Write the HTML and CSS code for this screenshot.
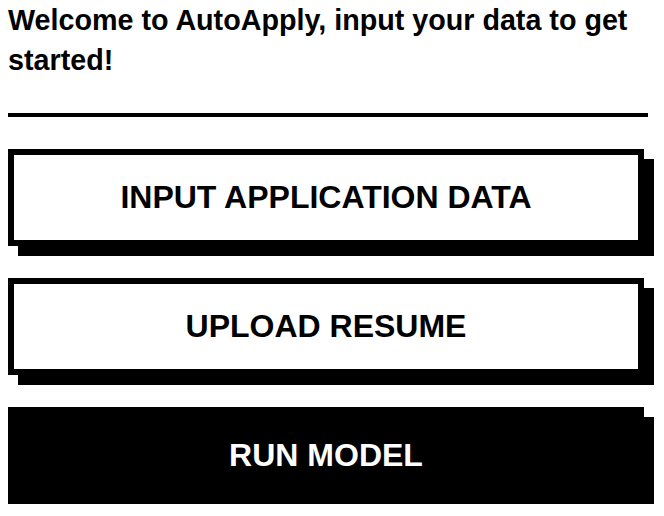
FILE: index.html
```html
<!DOCTYPE html>
<html lang="en">
<head>
    <meta charset="UTF-8">
    <meta name="viewport" content="width=device-width, initial-scale=1.0">
    <title>AutoApply</title>
    <link rel="stylesheet" href="styles.css">
</head>
<body>
    <div class="main">
        <h2 class="welcome">Welcome to AutoApply, input your data to get started!</h2>
        <hr class="divider">
        <div class="actions">
            <button class="btn">INPUT APPLICATION DATA</button>
            <button class="btn">UPLOAD RESUME</button>
            <button class="btn btn-dark">RUN MODEL</button>
        </div>
    </div>
</body>
</html>
```

FILE: styles.css
```css
body, html {
    margin: 0;
    padding: 0;
    background-color: white;
}
body {
    padding: 0 8px;
    font-family: "Liberation Sans", Arial, sans-serif;
    color: black;
}
.main {
    width: 640px;
}
.welcome {
    margin: 0;
    font-size: 28.7px;
    line-height: 40px;
    font-weight: bold;
}
.divider {
    margin: 33px 0 0 0;
    height: 4px;
    border: none;
    background-color: black;
}
.actions {
    display: flex;
    flex-direction: column;
    gap: 32px;
    margin-top: 32px;
    margin-right: 4px;
}
.btn {
    display: block;
    width: 100%;
    padding: 24px 0;
    border: 6px solid black;
    background-color: white;
    color: black;
    font-family: "Liberation Sans", Arial, sans-serif;
    font-size: 32px;
    line-height: 37px;
    font-weight: bold;
    text-align: center;
    box-shadow: 10px 10px 0 black;
    cursor: pointer;
}
.btn-dark {
    background-color: black;
    color: white;
}
```
